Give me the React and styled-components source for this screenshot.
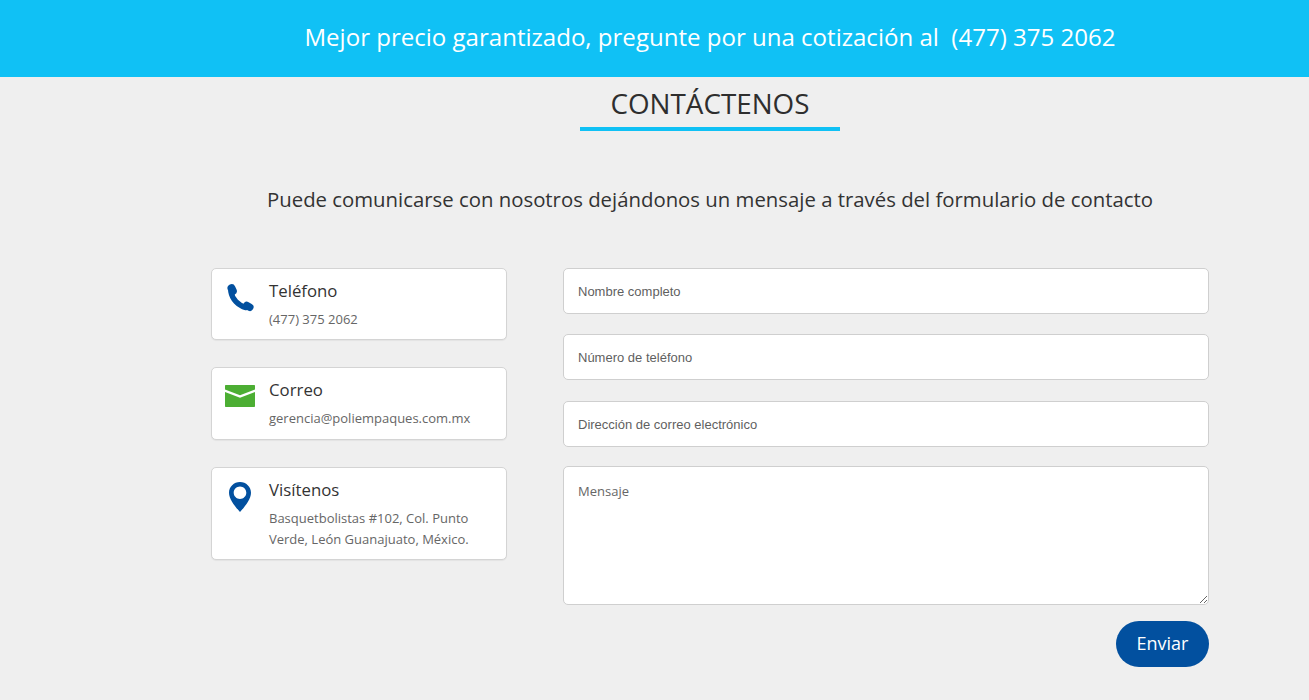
import React from "react";
import styled, { createGlobalStyle } from "styled-components";

const Estilos = createGlobalStyle`
  html, body {
    margin: 0;
    padding: 0;
    background: #efefef;
    font-family: "Open Sans", sans-serif;
    overflow: hidden;
  }
  * { box-sizing: border-box; }
`;

const Banner = styled.div`
  height: 77px;
  background: #10c1f5;
  display: flex;
  align-items: center;
  padding-bottom: 4px;
`;

const BannerTexto = styled.p`
  margin: 0 0 0 211px;
  width: 998px;
  text-align: center;
  color: #fff;
  font-size: 24.05px;
  white-space: pre;
`;

const Contenedor = styled.main`
  margin-left: 211px;
  width: 998px;
  display: flex;
  flex-direction: column;
`;

const Titulo = styled.h1`
  align-self: center;
  width: 260px;
  height: 54px;
  margin: 0;
  padding-top: 7px;
  text-align: center;
  font-size: 27.8px;
  line-height: 38px;
  font-weight: 400;
  color: #2e2e2e;
  border-bottom: 4px solid #10c1f5;
`;

const Intro = styled.p`
  margin: 53px 0 0;
  height: 84px;
  text-align: center;
  font-size: 20.35px;
  line-height: 30px;
  color: #333;
`;

const Columnas = styled.div`
  display: flex;
  justify-content: space-between;
  align-items: flex-start;
`;

const ColumnaInfo = styled.div`
  width: 296px;
  display: flex;
  flex-direction: column;
  gap: 27px;
`;

const Tarjeta = styled.div`
  min-height: ${(p) => p.$alto || 72}px;
  background: #fff;
  border: 1px solid #d4d4d4;
  border-radius: 5px;
  box-shadow: 0 1px 1px rgba(0, 0, 0, 0.05);
  display: flex;
  padding: 10px 12px 0 13px;
`;

const IconoCaja = styled.div`
  width: 30px;
  flex: none;
  margin-right: 14px;
  display: flex;
  justify-content: center;
  padding-top: ${(p) => p.$top}px;
`;

const TarjetaTitulo = styled.h3`
  margin: 0;
  font-size: 16.8px;
  line-height: 24px;
  font-weight: 400;
  color: #333;
`;

const TarjetaTexto = styled.p`
  margin: 6px 0 0;
  font-size: 13px;
  line-height: 21px;
  color: #666;
  padding-bottom: 9px;
`;

const Formulario = styled.form`
  width: 646px;
  display: flex;
  flex-direction: column;
`;

const Campo = styled.input`
  height: 46px;
  margin-bottom: ${(p) => p.$abajo}px;
  padding: 1px 15px 0 14px;
  background: #fff;
  border: 1px solid #cfcfcf;
  border-radius: 5px;
  font-family: "Liberation Sans", sans-serif;
  font-size: 13px;
  outline: none;
  &::placeholder { color: #5f5f5f; opacity: 1; }
`;

const Mensaje = styled.textarea`
  height: 139px;
  padding: 15px 15px 15px 14px;
  background: #fff;
  border: 1px solid #cfcfcf;
  border-radius: 5px;
  font-family: "Open Sans", sans-serif;
  font-size: 13px;
  outline: none;
  &::placeholder { color: #666; opacity: 1; }
`;

const BotonEnviar = styled.button`
  align-self: flex-end;
  margin-top: 16px;
  width: 93px;
  height: 46px;
  padding: 0 0 3px;
  border: none;
  border-radius: 23px;
  background: #02509f;
  color: #fff;
  font-family: "Open Sans", sans-serif;
  font-size: 18px;
`;

const IconoTelefono = () => (
  <svg width="28" height="28" viewBox="-1 0 28 28" fill="none" stroke="#02509f" strokeLinecap="round">
    <path strokeWidth="8" d="M4.500 4.200 5.800 7" />
    <path strokeWidth="5.400" d="M4 8C5.200 15 11 21.300 19 23.600" />
    <path strokeWidth="7.500" d="M19.800 21.500 22.800 23.200" />
  </svg>
);

const IconoCorreo = () => (
  <svg width="30" height="22" viewBox="0 0 30 22">
    <path fill="#4cae33" d="M1 0h28c.6 0 1 .4 1 1v3.400L15 10.200 0 4.400V1c0-.6.400-1 1-1Z" />
    <path fill="#4cae33" d="M0 7l15 5.800L30 7v14c0 .6-.4 1-1 1H1c-.6 0-1-.4-1-1V7Z" />
  </svg>
);

const IconoUbicacion = () => (
  <svg width="22" height="30" viewBox="0 0 22 30">
    <path
      fill="#02509f"
      fillRule="evenodd"
      d="M11 0C4.900 0 0 4.800 0 10.700 0 17.500 6.500 25 11 30c4.500-5 11-12.500 11-19.300C22 4.800 17.100 0 11 0Zm0 4.500c3.500 0 6.300 2.800 6.300 6.200s-2.800 6.200-6.300 6.200-6.300-2.800-6.300-6.200S7.500 4.500 11 4.500Z"
    />
  </svg>
);

export default function App() {
  return (
    <>
      <Estilos />
      <Banner>
        <BannerTexto>Mejor precio garantizado, pregunte por una cotización al  (477) 375 2062</BannerTexto>
      </Banner>
      <Contenedor>
        <Titulo>CONTÁCTENOS</Titulo>
        <Intro>Puede comunicarse con nosotros dejándonos un mensaje a través del formulario de contacto</Intro>
        <Columnas>
          <ColumnaInfo>
            <Tarjeta>
              <IconoCaja $top={5}><IconoTelefono /></IconoCaja>
              <div>
                <TarjetaTitulo>Teléfono</TarjetaTitulo>
                <TarjetaTexto>(477) 375 2062</TarjetaTexto>
              </div>
            </Tarjeta>
            <Tarjeta $alto={73}>
              <IconoCaja $top={7}><IconoCorreo /></IconoCaja>
              <div>
                <TarjetaTitulo>Correo</TarjetaTitulo>
                <TarjetaTexto>gerencia@poliempaques.com.mx</TarjetaTexto>
              </div>
            </Tarjeta>
            <Tarjeta>
              <IconoCaja $top={4}><IconoUbicacion /></IconoCaja>
              <div>
                <TarjetaTitulo>Visítenos</TarjetaTitulo>
                <TarjetaTexto>Basquetbolistas #102, Col. Punto<br />Verde, León Guanajuato, México.</TarjetaTexto>
              </div>
            </Tarjeta>
          </ColumnaInfo>
          <Formulario onSubmit={(e) => e.preventDefault()}>
            <Campo $abajo={20} placeholder="Nombre completo" />
            <Campo $abajo={21} placeholder="Número de teléfono" />
            <Campo $abajo={19} placeholder="Dirección de correo electrónico" />
            <Mensaje placeholder="Mensaje" />
            <BotonEnviar>Enviar</BotonEnviar>
          </Formulario>
        </Columnas>
      </Contenedor>
    </>
  );
}
